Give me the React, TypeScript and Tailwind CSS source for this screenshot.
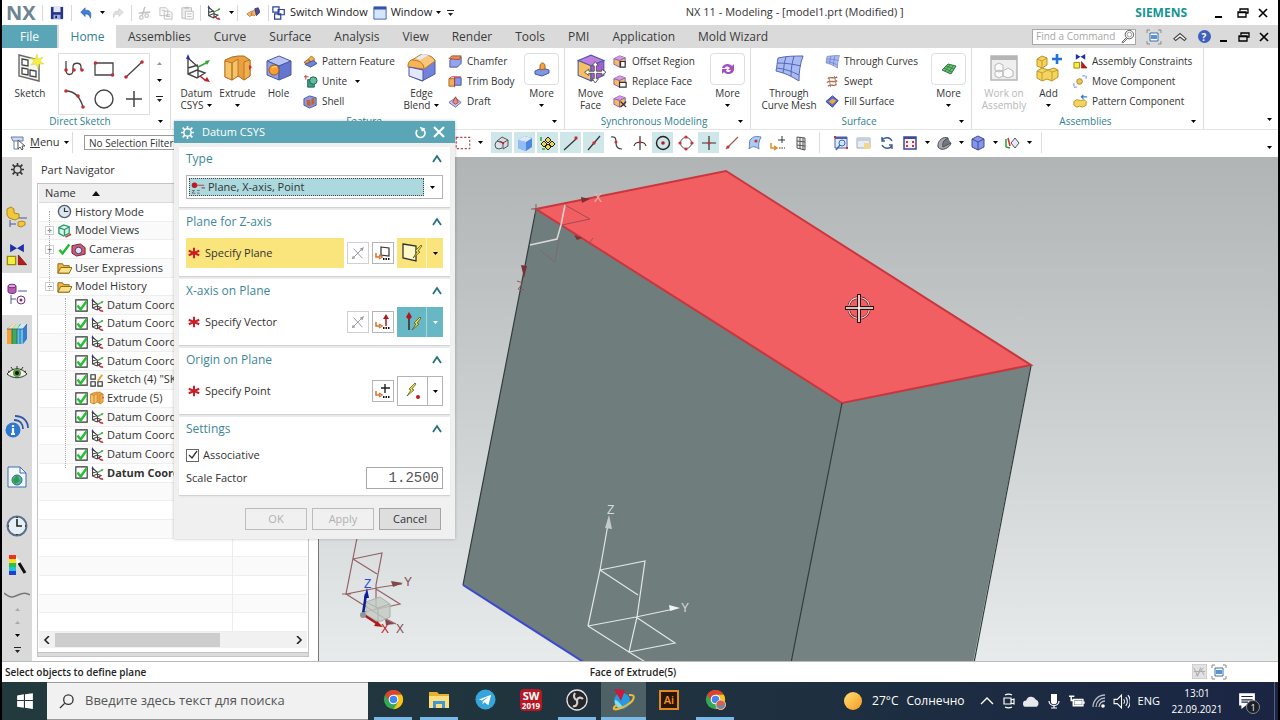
import React from 'react';

type Kids = { children?: React.ReactNode };

interface IcoProps extends Kids {
  size?: number;
  box?: number;
  className?: string;
}

function Ico({ size = 16, box = 16, className = '', children }: IcoProps) {
  return (
    <svg
      width={size}
      height={size}
      viewBox={`0 0 ${box} ${box}`}
      fill="none"
      className={`shrink-0 ${className}`}
      aria-hidden="true"
    >
      {children}
    </svg>
  );
}

const Caret = ({ className = 'fill-black' }: { className?: string }) => (
  <svg width="5" height="3" viewBox="0 0 5 3" className={`shrink-0 ${className}`} aria-hidden="true">
    <path d="M0 0h5L2.5 3z" />
  </svg>
);

const BarCaret = () => (
  <svg width="7" height="6" viewBox="0 0 7 6" className="shrink-0" aria-hidden="true">
    <path d="M0 0h7v1H0zM1 3h5L3.5 6z" fill="#222" />
  </svg>
);

const Sep = () => <span className="h-4 w-px shrink-0 bg-[#d8d8d8]" />;

/* ---------- drawings ---------- */

const Csys = ({ size = 16 }: { size?: number }) => (
  <Ico size={size} box={28}>
    <path d="M5 4v16l9 4 8-5-8-3-9 4M5 4l10 9v11M5 14l10-3" stroke="#444" strokeWidth={size < 20 ? 2.2 : 1.4} />
    <path d="M15 13l10-5" stroke="#3aa23a" strokeWidth={size < 20 ? 2.4 : 1.6} />
    <path d="M27 6l-5 1 2 4z" fill="#3aa23a" />
    <path d="M17 22l5 4" stroke="#c11c2a" strokeWidth={size < 20 ? 2.4 : 1.6} />
    <path d="M27 28l-6-1 3-4z" fill="#c11c2a" />
    <path d="M3 5l2-5 2 5z" fill="#2430c0" />
  </Ico>
);

const Cube = ({ size = 28, top = '#b9c4f4', left = '#8e9fe8', right = '#6476cf', children }: { size?: number; top?: string; left?: string; right?: string } & Kids) => (
  <Ico size={size} box={28}>
    <path d="M2 7L14 2l12 5-12 5z" fill={top} stroke="#4c5aa0" />
    <path d="M2 7l12 5v14L2 21z" fill={left} stroke="#4c5aa0" />
    <path d="M26 7l-12 5v14l12-5z" fill={right} stroke="#4c5aa0" />
    {children}
  </Ico>
);

const SketchIcon = () => (
  <Ico size={28} box={28}>
    <path d="M3 1l20 5v21L3 22z" fill="#f6f6f2" stroke="#666" strokeWidth="1.4" />
    <path d="M6 5l6 1v6l-6-1zM6 14l6 1v6l-6-1zM14 16l6 1v6l-6-1z" stroke="#444" strokeWidth="1.3" fill="#fff" />
    <path d="M21 0l1 5 5-2-3 4 4 3-5 0-1 5-2-5-5 1 3-4-4-3 5 1z" fill="#f4ee4a" stroke="#d6cf3a" strokeWidth=".5" />
  </Ico>
);

const ExtrudeIcon = ({ size = 28 }: { size?: number }) => (
  <Ico size={size} box={28}>
    <path d="M1 6l7-3 6-1h6l6 4v16l-6 4-6-4-6 4-7-3z" fill="#e8a040" stroke="#b06a1a" />
    <path d="M1 7l7 2v17l-7-3zM14 5v17l-6 4V9z" fill="#f6c468" stroke="#b06a1a" strokeWidth=".8" />
    <path d="M20 8v18l6-4V6z" fill="#f0b050" stroke="#b06a1a" strokeWidth=".8" />
    <path d="M25 11l3 2-3 3" fill="#d22" />
  </Ico>
);

const HoleIcon = () => (
  <Cube>
    <circle cx="9" cy="16" r="5" fill="#f6a030" stroke="#a85a10" />
    <path d="M7 14a4 4 0 0 1 5-1" stroke="#ffe0a0" />
  </Cube>
);

const EdgeBlendIcon = () => (
  <Ico size={30} box={30}>
    <path d="M3 9l12-6c6-1 12 1 13 5v13l-13 7-12-5z" fill="#7183dc" stroke="#4a58a8" />
    <path d="M1 13c0-6 5-8 11-6 4 1 5 4 5 9L1 14z" fill="#f5b455" stroke="#c07820" />
    <path d="M5 7l8-5c7-1 13 1 15 6l-11 8c0-6-5-9-12-9z" fill="#f7c67a" stroke="#c07820" />
    <path d="M9 5l7-4 6 1-9 5z" fill="#e4e9fd" />
    <path d="M2 14l14 3v11L2 23z" fill="#e2e7fc" stroke="#4a58a8" />
  </Ico>
);

const MoveFaceIcon = () => (
  <Cube size={30} top="#c07fe0" left="#f7c063" right="#a65fd0">
    <path
      d="M18 8l3 4h-2v5h5v-2l4 3-4 3v-2h-5v5h2l-3 4-3-4h2v-5h-5v2l-4-3 4-3v2h5v-5h-2z"
      fill="#fff"
      stroke="#555"
      strokeWidth=".9"
    />
  </Cube>
);

const MeshIcon = ({ size = 30 }: { size?: number }) => (
  <Ico size={size} box={30}>
    <path d="M4 5c9-2 16-2 25-2-3 8-4 16-4 25-8-5-14-8-23-10 1-5 1-8 2-13z" fill="#a9bbf2" stroke="#5468b4" />
    <path d="M12 4c-2 5-2 11-3 16M20 3c-2 7-3 13-3 20M3 10c8 0 16 1 24 3M3 15c8 1 14 3 22 7" stroke="#5468b4" />
  </Ico>
);

const WorkAsmIcon = () => (
  <Ico size={28} box={28}>
    <path d="M1 2h26v24H1z" fill="#efefef" stroke="#b5b5b5" strokeWidth="1.5" />
    <path d="M1 2h26v4H1z" fill="#b5b5b5" />
    <path d="M5 11l4-2 4 2v5l-4 2-4-2zM5 18l4-2 4 2v4l-4 2-4-2zM13 17l5-3 5 3v5l-5 2-5-2z" fill="#fafafa" stroke="#b8b8b8" />
  </Ico>
);

const AddIcon = () => (
  <Ico size={28} box={28}>
    <path d="M2 5l5-3 5 2v7l-5 3-5-2z" fill="#f4d35e" stroke="#b99322" />
    <path d="M2 17l5-3 6 2 6-2 4 2v7l-6 4-5-2-5 2-5-3z" fill="#f4d35e" stroke="#b99322" />
    <path d="M2 5l5 2 5-3M7 7v6M2 17l5 2 6-3 4 2 6-2M7 19v7M17 18v8" stroke="#b99322" strokeWidth=".8" />
    <path d="M22 0v10M17 5h10" stroke="#2272d8" strokeWidth="2.6" />
  </Ico>
);

const Mini = ({ a, b, mark }: { a: string; b: string; mark?: string }) => (
  <Ico size={15}>
    <path d="M1 5l6-3 6 2v7l-6 3-6-3z" fill={a} stroke={b} />
    <path d="M1 5l6-3 6 2-6 3z" fill="#cf9ae6" />
    <path d="M1 5l6 2 6-3M7 7v7" stroke={b} />
    {mark && <path d={mark} stroke="#333" strokeWidth="1.3" fill="#fff" />}
  </Ico>
);

const PatternIcon = () => (
  <Ico size={15}>
    <path d="M1 9l4-3 4 2-4 3z" fill="#f0a040" stroke="#9a5a1a" />
    <path d="M6 5l3-3 3 3v3H7z" fill="#f2b050" stroke="#b06a1a" />
    <path d="M2 11l6 3 7-4-4-3z" fill="#6c86dc" stroke="#42549c" />
  </Ico>
);

const UniteIcon = () => (
  <Ico size={15}>
    <path d="M5 6h7v8H5z" fill="#3f9f88" stroke="#1d5f50" />
    <circle cx="11" cy="7" r="4" fill="#5fbf9f" stroke="#1d5f50" />
    <path d="M3 1v5M1 3h5" stroke="#c33" />
  </Ico>
);

const ShellIcon = () => (
  <Ico size={15}>
    <path d="M1 5l6-3 7 2v8l-7 3-6-3z" fill="#8b99dd" stroke="#4b579a" />
    <path d="M4 6l4 1v6l-4-1zM9 5l3-1v7l-3 1z" fill="#c4622d" />
  </Ico>
);

const ChamferIcon = () => (
  <Ico size={15}>
    <path d="M2 7l3-4h9v7l-4 4H2z" fill="#93a5ea" stroke="#4b579a" />
    <path d="M1 5l3-3h10l-2 4z" fill="#e88a5a" stroke="#a3502a" />
  </Ico>
);

const TrimIcon = () => (
  <Ico size={15}>
    <path d="M1 5h6v8H1z" fill="#f2ae5a" stroke="#aa6a22" />
    <path d="M7 4h7v8H7z" fill="#8798e6" stroke="#4b579a" />
    <path d="M1 5l3-2h10M7 3v11" stroke="#c33" />
  </Ico>
);

const DraftIcon = () => (
  <Ico size={15}>
    <path d="M1 9l7-5 6 5-6 5z" fill="#c4cdf4" stroke="#6a6aa0" />
    <path d="M5 9l3-6 3 6-3 2z" fill="#e88b80" stroke="#a34444" />
  </Ico>
);

const SweptIcon = () => (
  <Ico size={15}>
    <path d="M3 5c4-3 6 1 10-2M2 9c4-3 7 1 11-2M3 13c4-3 6 1 9-2" stroke="#c2663c" strokeWidth="1.5" />
    <path d="M4 3l2 11M10 2l2 10" stroke="#888" />
  </Ico>
);

const FillIcon = () => (
  <Ico size={15}>
    <path d="M1 8l7-6 6 5-6 7z" fill="#5a6ed0" stroke="#333f8a" />
    <path d="M4 8l4-3 4 2-4 4z" fill="#f2a83a" />
  </Ico>
);

const ConstraintIcon = ({ size = 16 }: { size?: number }) => (
  <Ico size={size}>
    <path d="M3 0l5 3-5 3zM13 0L8 3l5 3z" fill="#1f2fa8" />
    <path d="M1 9h6v6H1z" fill="#f4ee3c" stroke="#9a8a10" />
    <path d="M9 8l6 7H9z" fill="#c01818" stroke="#7a0f0f" strokeWidth=".6" />
  </Ico>
);

const MoveCompIcon = () => (
  <Ico size={15}>
    <circle cx="7" cy="8" r="3" fill="#f0c850" stroke="#a8822a" />
    <path d="M10 2h4v4M1 10v4h4" stroke="#5b7fd8" strokeDasharray="3 1" />
  </Ico>
);

const PatCompIcon = () => (
  <Ico size={15}>
    <path d="M1 8l3-2 4 1 4-1 2 2v4l-4 2-3-1-3 1-3-2z" fill="#f4d35e" stroke="#b99322" />
    <path d="M15 3H9M11 1L9 3l2 2" stroke="#3a78d8" strokeWidth="1.4" />
  </Ico>
);

const GearIcon = ({ size = 14, className = '' }: { size?: number; className?: string }) => (
  <Ico size={size} className={className}>
    <circle cx="8" cy="8" r="4.5" stroke="currentColor" strokeWidth="1.8" />
    <path
      d="M8 0v3M8 13v3M0 8h3M13 8h3M2 2l3 3M11 11l3 3M14 2l-3 3M5 11l-3 3"
      stroke="currentColor"
      strokeWidth="2"
    />
  </Ico>
);

const Minimize = () => (
  <Ico size={12} box={12}>
    <path d="M2 10h7" stroke="#000" strokeWidth="2" />
  </Ico>
);
const Restore = () => (
  <Ico size={12} box={12}>
    <path d="M3 4V2h8v4H9M1 5h8v5H1zM1 5.500h8" stroke="#000" strokeWidth="1.3" />
  </Ico>
);
const Close = () => (
  <Ico size={12} box={12}>
    <path d="M2 2l8 8M10 2l-8 8" stroke="#000" strokeWidth="1.7" />
  </Ico>
);
const FullScreen = () => (
  <Ico size={16}>
    <path d="M1 4V1h3M12 1h3v3M15 12v3h-3M4 15H1v-3" stroke="#888" />
    <path d="M4 4h8v8H4z" fill="#fff" stroke="#3b6ea8" />
    <path d="M5 6h6v4H5z" fill="#5c93d6" />
  </Ico>
);

/* ---------- title bar ---------- */

function IconButton({ label, className = '', children }: { label: string; className?: string } & Kids) {
  return (
    <button type="button" aria-label={label} className={`flex items-center justify-center ${className}`}>
      {children}
    </button>
  );
}

function TitleBar() {
  return (
    <header className="flex h-[25px] shrink-0 items-center bg-white">
      <div className="flex shrink-0 items-center">
        <span className="w-9 pl-1 text-[20px] leading-6 font-bold text-[#6d8593]">NX</span>
        <span className="ml-1" />
        <Sep />
        <IconButton label="Save" className="w-7">
          <Ico size={14}>
            <path d="M1 1h14v14H1z" fill="#26348c" />
            <path d="M4 1h8v6H4z" fill="#dfe6f6" />
            <path d="M4 10h8v5H4z" fill="#9fb0dd" />
            <path d="M6 11h2v3H6z" fill="#1a2468" />
          </Ico>
        </IconButton>
        <Sep />
        <IconButton label="Undo" className="w-7">
          <Ico size={14}>
            <path d="M2 7l5-5v3c5-1 8 2 6 9-1-4-3-5-6-5v3z" fill="#3f7fd6" stroke="#2a58a6" strokeWidth=".7" />
          </Ico>
        </IconButton>
        <Caret />
        <IconButton label="Redo" className="w-[26px]">
          <Ico size={14}>
            <path d="M14 7L9 3v3C4 5 2 8 3 13c1-3 3-4 6-4v3z" fill="#e3e3e3" stroke="#c4c4c4" strokeWidth=".7" />
          </Ico>
        </IconButton>
        <Sep />
        <IconButton label="Cut" className="w-6">
          <Ico size={14}>
            <path d="M9 1L6 11M2 8l13-1" stroke="#c4c4c4" strokeWidth="1.8" />
            <circle cx="5" cy="13" r="2" stroke="#c4c4c4" strokeWidth="1.4" />
            <circle cx="11" cy="11" r="2" stroke="#c4c4c4" strokeWidth="1.4" />
          </Ico>
        </IconButton>
        <IconButton label="Copy" className="w-5">
          <Ico size={14}>
            <path d="M1 2h7l2 2v7H1zM6 6h6l3 2v7H6z" fill="#fafafa" stroke="#bdbdbd" />
            <path d="M8 10h5M8 12h5M3 5h4" stroke="#bdbdbd" />
          </Ico>
        </IconButton>
        <IconButton label="Paste" className="w-6">
          <Ico size={14}>
            <path d="M1 2h11v12H1z" fill="#eee" stroke="#bdbdbd" />
            <path d="M5 6h9v9H5z" fill="#fafafa" stroke="#bdbdbd" />
            <path d="M4 1h5v2H4z" fill="#bdbdbd" />
            <path d="M7 9h5M7 12h5" stroke="#bdbdbd" />
          </Ico>
        </IconButton>
        <Sep />
        <IconButton label="Datum CSYS" className="w-6">
          <Csys size={15} />
        </IconButton>
        <span className="flex w-3 justify-center">
          <Caret />
        </span>
        <Sep />
        <IconButton label="Touch mode" className="w-[30px]">
          <Ico size={14}>
            <path d="M1 9l5-3 4 1-2 3-4 2z" fill="#f4b26a" stroke="#a9702f" strokeWidth=".8" />
            <path d="M7 6l4-2 2 2-3 5-4-1z" fill="#f4b26a" stroke="#a9702f" strokeWidth=".8" />
            <path d="M10 3l4-1 2 5-4 4z" fill="#4a4a9a" stroke="#2d2d6a" strokeWidth=".8" />
          </Ico>
        </IconButton>
        <Sep />
        <button type="button" className="flex items-center gap-1 pl-[3px] text-[11px] text-[#222]">
          <Ico size={14}>
            <path d="M1 1h7v6H1zM7 4h7v6H7zM3 9h7v6H3z" fill="#fff" stroke="#2a3f9c" strokeWidth="1.400" />
          </Ico>
          Switch Window
        </button>
        <button type="button" className="ml-[5px] flex items-center gap-1 text-[11px] text-[#222]">
          <Ico size={14}>
            <path d="M1 1h14v14H1z" fill="#d6e6fa" stroke="#3352b0" />
            <path d="M1 1h14v3H1z" fill="#3352b0" />
          </Ico>
          Window
          <Caret />
        </button>
        <span className="ml-[6px]">
          <BarCaret />
        </span>
      </div>
      <h1 className="min-w-0 flex-1 truncate text-center text-[11px] text-[#333]">
        NX 11 - Modeling - [model1.prt (Modified) ]
      </h1>
      <div className="flex shrink-0 items-center pr-[7px]">
        <span className="mr-5 text-[12px] font-bold text-[#129590]">SIEMENS</span>
        <IconButton label="Minimize" className="w-6"><Minimize /></IconButton>
        <IconButton label="Restore" className="w-6"><Restore /></IconButton>
        <IconButton label="Close" className="w-4"><Close /></IconButton>
      </div>
    </header>
  );
}

const tabs = ['Assemblies', 'Curve', 'Surface', 'Analysis', 'View', 'Render', 'Tools', 'PMI', 'Application', 'Mold Wizard'];

function TabBar() {
  return (
    <nav className="flex h-[23px] shrink-0 items-stretch bg-[#dadada] text-[12px] text-[#3a3a3a]">
      <button type="button" className="w-[55px] bg-[#5aa6b6] text-white">File</button>
      <button type="button" className="ml-0.5 w-[57px] bg-white text-[#2f8190]">Home</button>
      {tabs.map(tab => (
        <button type="button" key={tab} className="ml-px px-[11px]">{tab}</button>
      ))}
      <div className="ml-auto flex items-center pr-[6px]">
        <label className="flex h-4 w-[104px] items-center border border-[#a8a8a8] bg-white">
          <input
            type="text"
            aria-label="Find a Command"
            placeholder="Find a Command"
            className="w-0 flex-1 pl-[3px] text-[10px] outline-none placeholder:text-[#a6a6a6]"
          />
          <Ico size={15}>
            <circle cx="10" cy="6" r="4.500" stroke="#555" />
            <circle cx="10" cy="6" r="2.500" stroke="#999" />
            <path d="M7 9l-5 5 1 1 5-5" stroke="#555" />
          </Ico>
        </label>
        <IconButton label="Full screen" className="ml-1 w-7"><FullScreen /></IconButton>
        <IconButton label="Minimize ribbon" className="w-6">
          <Ico size={14}>
            <path d="M1 10l7-6 7 6-2 2-5-4-5 4z" fill="#fff" stroke="#444" strokeWidth="1.2" />
          </Ico>
        </IconButton>
        <IconButton label="Help" className="w-6">
          <span className="flex size-[13px] items-center justify-center rounded-full bg-[#3c5fc0] text-[10px] leading-3 font-bold text-white">?</span>
        </IconButton>
        <IconButton label="Minimize part" className="w-4"><Minimize /></IconButton>
        <IconButton label="Restore part" className="w-6"><Restore /></IconButton>
        <IconButton label="Close part" className="w-4"><Close /></IconButton>
      </div>
    </nav>
  );
}

/* ---------- ribbon ---------- */

function Group({ title, className, children }: { title: string; className: string } & Kids) {
  return (
    <section className={`flex shrink-0 flex-col border-r border-[#dcdcdc] pt-[3px] ${className}`}>
      <div className="flex h-[62px]">{children}</div>
      <div className="flex h-4 items-center pr-[7px]">
        <h2 className="flex-1 text-center text-[10px] leading-4 text-[#2d7f8f]">{title}</h2>
        <Caret />
      </div>
    </section>
  );
}

function Big({ icon, lines, caret, className = 'w-[41px]' }: { icon: React.ReactNode; lines: string[]; caret?: boolean; className?: string }) {
  return (
    <button type="button" className={`flex shrink-0 flex-col items-center pt-[3px] text-[10px] leading-3 ${className}`}>
      <span className="mb-[5px] flex h-7 items-center">{icon}</span>
      <span className="whitespace-nowrap">{lines[0]}</span>
      <span className="flex h-3 items-center gap-1 whitespace-nowrap">
        {lines[1]}
        {caret && <Caret />}
      </span>
    </button>
  );
}

function Small({ icon, text, caret }: { icon: React.ReactNode; text: string; caret?: boolean }) {
  return (
    <button type="button" className="flex h-5 items-center gap-1 text-[10px] whitespace-nowrap">
      {icon}
      {text}
      {caret && <span className="ml-1"><Caret /></span>}
    </button>
  );
}

function More({ children }: Kids) {
  return (
    <button type="button" className="ml-auto flex w-[35px] shrink-0 flex-col items-center pt-0.5 text-[10px] leading-3">
      <span className="mb-0.5 flex h-8 w-full items-center justify-center rounded-sm border border-[#dedede]">{children}</span>
      More
      <span className="flex h-3 items-center"><Caret /></span>
    </button>
  );
}

const face = { a: '#f5bd62', b: '#8a5aa8' };

function Ribbon() {
  return (
    <div className="flex h-[81px] shrink-0 bg-white text-[#333]">
      <Group title="Direct Sketch" className="w-[169px]">
        <Big icon={<SketchIcon />} lines={['Sketch']} className="w-14" />
        <div className="mt-0.5 grid h-[62px] w-[92px] shrink-0 grid-cols-3 place-items-center border border-[#dedede]">
          <IconButton label="Profile">
            <Ico size={22} box={22}>
              <path d="M3 3v9c0 6 7 6 7 0V9c0-5 8-5 8 0v3" stroke="#444" strokeWidth="1.3" />
              <g fill="#c92a34"><circle cx="3" cy="12" r="1.800" /><circle cx="11" cy="12" r="1.800" /><circle cx="19" cy="12" r="1.800" /></g>
            </Ico>
          </IconButton>
          <IconButton label="Rectangle">
            <Ico size={22} box={22}>
              <path d="M2 5h18v12H2z" stroke="#444" strokeWidth="1.300" />
              <g fill="#c92a34"><circle cx="2.500" cy="5" r="1.800" /><circle cx="19.500" cy="17" r="1.800" /></g>
            </Ico>
          </IconButton>
          <IconButton label="Line">
            <Ico size={22} box={22}>
              <path d="M3 19L19 4" stroke="#444" strokeWidth="1.300" />
              <g fill="#c92a34"><circle cx="3" cy="19" r="1.800" /><circle cx="19" cy="4" r="1.800" /></g>
            </Ico>
          </IconButton>
          <IconButton label="Arc">
            <Ico size={22} box={22}>
              <path d="M3 3c8 0 14 6 17 16" stroke="#444" strokeWidth="1.300" />
              <g fill="#c92a34"><circle cx="3" cy="3" r="1.800" /><circle cx="15" cy="8" r="1.800" /><circle cx="20" cy="19" r="1.800" /></g>
            </Ico>
          </IconButton>
          <IconButton label="Circle">
            <Ico size={22} box={22}><circle cx="11" cy="11" r="9" stroke="#444" strokeWidth="1.400" /></Ico>
          </IconButton>
          <IconButton label="Point">
            <Ico size={22} box={22}><path d="M11 3v16M3 11h16" stroke="#444" strokeWidth="1.500" /></Ico>
          </IconButton>
        </div>
        <div className="flex w-[18px] flex-col items-center justify-around py-1">
          <Caret className="rotate-180 fill-[#999]" />
          <Caret />
          <BarCaret />
        </div>
      </Group>

      <Group title="Feature" className="w-[394px] pl-[5px]">
        <Big icon={<Csys size={28} />} lines={['Datum', 'CSYS']} caret />
        <Big icon={<ExtrudeIcon />} lines={['Extrude']} caret />
        <Big icon={<HoleIcon />} lines={['Hole']} />
        <div className="ml-1 w-[98px]">
          <Small icon={<PatternIcon />} text="Pattern Feature" />
          <Small icon={<UniteIcon />} text="Unite" caret />
          <Small icon={<ShellIcon />} text="Shell" />
        </div>
        <Big icon={<EdgeBlendIcon />} lines={['Edge', 'Blend']} caret />
        <div className="ml-1.5">
          <Small icon={<ChamferIcon />} text="Chamfer" />
          <Small icon={<TrimIcon />} text="Trim Body" />
          <Small icon={<DraftIcon />} text="Draft" />
        </div>
        <div className="ml-auto mr-[5px] flex">
          <More>
            <Ico size={16}>
              <path d="M1 10l7-3 7 2v3l-7 3-7-2z" fill="#7d97e4" stroke="#44589f" />
              <path d="M6 9V5c0-4 5-4 5 0v3z" fill="#f2a34a" stroke="#a8641c" />
            </Ico>
          </More>
        </div>
      </Group>

      <Group title="Synchronous Modeling" className="w-[186px] pl-[5px]">
        <Big icon={<MoveFaceIcon />} lines={['Move', 'Face']} />
        <div className="ml-0.5">
          <Small icon={<Mini {...face} mark="M8 8h5v6H8z" />} text="Offset Region" />
          <Small icon={<Mini {...face} mark="M7 9h7v5H7z" />} text="Replace Face" />
          <Small icon={<Mini {...face} mark="M8 8l6 6M14 8l-6 6" />} text="Delete Face" />
        </div>
        <div className="ml-auto mr-[5px] flex">
          <More>
            <Ico size={16}>
              <path d="M2 7c1-5 8-5 10-2l2-2v6H8l2-2C8 5 5 5 5 7zM14 9c-1 5-8 5-10 2l-2 2V8h5l-1 2c2 2 4 1 5-1z" fill="#a24fc0" />
            </Ico>
          </More>
        </div>
      </Group>

      <Group title="Surface" className="w-[221px] pl-2">
        <Big icon={<MeshIcon />} lines={['Through', 'Curve Mesh']} className="w-[60px]" />
        <div className="ml-1.5">
          <Small icon={<MeshIcon size={15} />} text="Through Curves" />
          <Small icon={<SweptIcon />} text="Swept" />
          <Small icon={<FillIcon />} text="Fill Surface" />
        </div>
        <div className="ml-auto mr-[5px] flex">
          <More>
            <Ico size={16}>
              <path d="M1 9l6-6 8 2-5 8z" fill="#6bbf78" stroke="#2d7a3c" />
              <path d="M3 7l8 4M5 5l8 3M9 4l-5 6M12 5l-5 7" stroke="#2d7a3c" strokeWidth=".8" />
            </Ico>
          </More>
        </div>
      </Group>

      <Group title="Assemblies" className="w-[232px] pl-2">
        <span className="flex text-[#b8b8b8]">
          <Big icon={<WorkAsmIcon />} lines={['Work on', 'Assembly']} className="w-12" />
        </span>
        <Big icon={<AddIcon />} lines={['Add']} caret />
        <div className="ml-1">
          <Small icon={<ConstraintIcon size={15} />} text="Assembly Constraints" />
          <Small icon={<MoveCompIcon />} text="Move Component" />
          <Small icon={<PatCompIcon />} text="Pattern Component" />
        </div>
      </Group>
      <div className="flex flex-1 items-end justify-end pr-[6px] pb-2">
        <Caret />
      </div>
    </div>
  );
}

/* ---------- selection toolbar ---------- */

interface Tool {
  label: string;
  on?: boolean;
  caret?: boolean;
  art: React.ReactNode;
}

const snapTools: Tool[] = [
  { label: 'Shaded edges', on: true, art: <><circle cx="5" cy="10" r="4" fill="#dfe3f0" stroke="#555" /><path d="M3 6l5-4 6 3v6l-5 3M3 6l6 2 5-3M9 8v6" stroke="#555" fill="#d8d8e2" /><circle cx="9" cy="8" r="1.200" fill="#c22" /></> },
  { label: 'Solid body', on: true, art: <><path d="M1 5l6-4 8 2v9l-6 4-8-3z" fill="#4f86e0" /><path d="M1 5l8 2v9l-8-3z" fill="#92bcf8" /><path d="M1 5l6-4 8 2-6 4z" fill="#dbe9ff" /></> },
  { label: 'Snap points', on: true, art: <><path d="M8 2l3 3-3 3-3-3zM4 6l3 3-3 3-3-3zM12 6l3 3-3 3-3-3zM8 9l3 3-3 3-3-3z" fill="#f0d848" stroke="#222" /><path d="M1 2v4M2 14h3" stroke="#2a2" strokeWidth="1.500" /></> },
  { label: 'End point', on: true, art: <><path d="M1 15L13 4" stroke="#333" strokeWidth="1.200" /><circle cx="13" cy="3" r="1.700" fill="#c33" /></> },
  { label: 'Mid point', on: true, art: <><path d="M2 15L14 1" stroke="#333" strokeWidth="1.200" /><circle cx="8" cy="8" r="1.700" fill="#c33" /></> },
  { label: 'Control point', art: <><path d="M2 2c5-1 5 2 5 6s2 6 6 6" stroke="#444" strokeWidth="1.200" /><circle cx="7" cy="7" r="1.500" fill="#c33" /></> },
  { label: 'Intersection', art: <><path d="M8 1v14M2 11c1-5 11-5 12 0" stroke="#333" strokeWidth="1.200" /><circle cx="8" cy="7" r="1.500" fill="#c33" /></> },
  { label: 'Arc center', on: true, art: <><circle cx="8" cy="8" r="6.500" stroke="#222" strokeWidth="1.400" /><circle cx="8" cy="8" r="1.800" fill="#a22" /></> },
  { label: 'Quadrant point', art: <><circle cx="8" cy="8" r="5.500" stroke="#555" /><g fill="#c33"><circle cx="8" cy="2" r="1.600" /><circle cx="8" cy="14" r="1.600" /><circle cx="2" cy="8" r="1.600" /><circle cx="14" cy="8" r="1.600" /></g></> },
  { label: 'Existing point', on: true, art: <><path d="M8 1v14M1 8h14" stroke="#333" strokeWidth="1.200" /><circle cx="8" cy="8" r="1.600" fill="#c33" /></> },
  { label: 'Point on curve', art: <><path d="M2 14L14 2" stroke="#a85a50" strokeWidth="1.200" /><circle cx="4" cy="12" r="1.600" fill="#c33" /></> },
  { label: 'Point on face', art: <><path d="M3 5c3-4 7-4 11-3-2 4-3 8-2 12-4-3-7-3-10 0 1-4 0-6 1-9z" fill="#a9cbf4" stroke="#5f86c0" /><circle cx="9" cy="6" r="1.600" fill="#c33" /></> },
  { label: 'Point constructor', art: <><path d="M12 1v7M8 5h7" stroke="#333" /><path d="M1 8v5h5M4 11l3 2-3 2" stroke="#e08a20" strokeWidth="1.500" /><path d="M9 13h6" stroke="#333" strokeDasharray="1.500 1" /></> },
  { label: 'Grid point', art: <><path d="M4 2l8 1v12l-8-2zM7 2v12M10 3v12M4 6l8 1M4 10l8 1" stroke="#555" fill="#eee" /></> },
];

const viewTools: Tool[] = [
  { label: 'Zoom window', art: <><path d="M2 2h12v11H2z" stroke="#4b5fae" fill="#e4e9f8" /><path d="M2 3h12" stroke="#4b5fae" strokeWidth="2" /><circle cx="9" cy="8" r="3" fill="#cfe6f8" stroke="#3a6fb0" /><path d="M7 10l-4 5" stroke="#3a6fb0" strokeWidth="1.500" /><path d="M1 1h2v2H1zM13 12h2v2h-2z" fill="#c33" /></> },
  { label: 'Fit', art: <><path d="M1 3h13v10H1z" fill="#e8edf4" stroke="#a5aab5" /><path d="M1 3h13v3H1z" fill="#c3d0e4" /><path d="M8 8h6v6H8z" fill="#f1d690" /></> },
  { label: 'Rotate', art: <path d="M13 6A6 6 0 0 0 3 5M3 10a6 6 0 0 0 10 1M3 2v4h3M13 14v-4h-3" stroke="#3a5a9a" strokeWidth="1.400" /> },
  { label: 'Layout', caret: true, art: <><path d="M2 2h12v12H2z" fill="#f6f2f2" stroke="#3a4a9c" strokeWidth="1.500" /><path d="M2 3h12" stroke="#3a4a9c" strokeWidth="2" /><path d="M5 6v2M11 6v2M5 10v2M11 10v2" stroke="#c33" strokeWidth="2" /></> },
  { label: 'Render style', caret: true, art: <><path d="M2 12C1 5 8 1 12 3v5h3c-1 5-10 9-13 4z" fill="#a5a9ad" stroke="#4b4f54" /><path d="M12 3C7 5 6 9 7 12l8-4" stroke="#4b4f54" fill="#72777c" /></> },
  { label: 'Orient view', caret: true, art: <><path d="M2 4l6-3 6 3v8l-6 3-6-3z" fill="#8596e4" stroke="#3f4d9c" /><path d="M2 4l6 3 6-3M8 7v8" stroke="#3f4d9c" /></> },
  { label: 'Section', caret: true, art: <><path d="M2 4v8M2 12l4 1" stroke="#2a9a3a" strokeWidth="1.500" /><path d="M4 3l2 8" stroke="#c33" strokeWidth="1.500" /><path d="M11 3l4 5-4 5-4-5z" fill="#e6e9f8" stroke="#555" /></> },
];

function ToolButton({ tool }: { tool: Tool }) {
  return (
    <>
      <button
        type="button"
        aria-label={tool.label}
        className={tool.on ? 'flex w-[21px] shrink-0 items-center justify-center bg-[#cfe7e8]' : 'flex w-[21px] shrink-0 items-center justify-center'}
      >
        <Ico size={16}>{tool.art}</Ico>
      </button>
      {tool.caret && <span className="ml-px flex w-2 items-center justify-center"><Caret /></span>}
    </>
  );
}

function SelectionBar() {
  return (
    <div className="flex h-7 shrink-0 items-stretch border-t border-[#e4e4e4] bg-white pt-0.5 pb-1 text-[#333]">
      <button type="button" className="ml-2 flex w-[62px] items-center gap-1 text-[11px]">
        <Ico size={16}>
          <path d="M1 2h12v4H3z" fill="#cdd9ee" stroke="#6a7fa8" />
          <path d="M4 6v8h5" stroke="#6a7fa8" />
          <path d="M8 5v9l2-2 2 3 1-1-1-3h3z" fill="#fff" stroke="#555" />
        </Ico>
        <span><u>M</u>enu</span>
        <Caret />
      </button>
      <span className="w-px bg-[#dcdcdc]" />
      <select
        aria-label="Selection filter"
        className="my-[3px] ml-[11px] w-40 appearance-none border border-[#9a9a9a] bg-white pl-1 text-[10px] outline-none"
      >
        <option>No Selection Filter</option>
      </select>
      <div className="ml-[210px] flex shrink-0 items-center">
        <Ico size={18}>
          <path d="M2 3h12v10H2z" stroke="#b04a4a" strokeDasharray="2 1.500" />
        </Ico>
        <span className="ml-1.5 flex w-3"><Caret /></span>
      </div>
      <div className="ml-px flex gap-0.5">
        {snapTools.map(tool => <ToolButton key={tool.label} tool={tool} />)}
      </div>
      <span className="mx-2 w-px bg-[#dcdcdc]" />
      <div className="ml-0.5 flex gap-0.5">
        {viewTools.map(tool => <ToolButton key={tool.label} tool={tool} />)}
      </div>
      <span className="ml-2 w-px bg-[#dcdcdc]" />
      <span className="ml-auto flex items-end pr-[6px] pb-1"><Caret /></span>
    </div>
  );
}

/* ---------- resource bar and part navigator ---------- */

function ResourceBar() {
  return (
    <aside className="flex w-[30px] shrink-0 flex-col items-center bg-[#d9d9d9]">
      <IconButton label="Options" className="h-6 w-full"><GearIcon size={13} className="text-[#333]" /></IconButton>
      <IconButton label="Assembly Navigator" className="mt-4 h-10 w-full">
        <Ico size={22} box={22}>
          <path d="M1 3l4-2 3 2v4l5 1v4l-4 2-6-2-2-3z" fill="#f0c83a" stroke="#b08a18" />
          <path d="M13 12h8M4 14v7M4 18h6" stroke="#44589f" />
          <path d="M12 16l4-1 3 1v3l-4 2-3-1z" fill="#f0c83a" stroke="#b08a18" />
        </Ico>
      </IconButton>
      <IconButton label="Constraint Navigator" className="h-9 w-full"><ConstraintIcon size={22} /></IconButton>
      <IconButton label="Part Navigator" className="h-[42px] w-full bg-white">
        <Ico size={22} box={22}>
          <path d="M2 3v6c1 2 7 2 8 0V3" fill="#b05fb0" stroke="#7a2a80" />
          <ellipse cx="6" cy="3" rx="4" ry="1.800" fill="#dca6dc" stroke="#7a2a80" />
          <path d="M12 8h9M5 12v9M5 16h5" stroke="#44589f" />
          <circle cx="15" cy="17" r="4" stroke="#7a2a80" /><circle cx="15" cy="17" r="1.500" fill="#7a2a80" />
        </Ico>
      </IconButton>
      <IconButton label="Reuse Library" className="h-[38px] w-full">
        <Ico size={22} box={22}>
          <path d="M1 6l6-5h14v15l-4 5H1z" fill="#3a7ad0" />
          <path d="M1 6l6-5h3L6 6z" fill="#fbe0a0" />
          <path d="M6 6l4-5h4l-3 5z" fill="#bfe8c0" />
          <path d="M11 6l4-5h6l-4 5z" fill="#cfe8fa" />
          <path d="M1 6h5v15H1z" fill="#f6a030" />
          <path d="M6 6h5v15H6z" fill="#3fae50" />
          <path d="M11 6h6v15h-6z" fill="#5fc0e8" />
          <path d="M1 6h16M6 6v15M11 6v15M14 6v15M17 6l4-5" stroke="#2a5a80" strokeWidth=".8" />
        </Ico>
      </IconButton>
      <IconButton label="HD3D Tools" className="h-10 w-full">
        <Ico size={22} box={22}>
          <path d="M1 12c6-7 14-7 20 0-6 5-14 5-20 0z" fill="#f2f2ea" stroke="#333" />
          <circle cx="11" cy="11" r="4" fill="#5a9a3a" /><circle cx="11" cy="11" r="2" fill="#111" />
          <path d="M2 9l2 1M5 5l2 3M11 4v3M17 5l-2 3M20 9l-2 1" stroke="#333" />
        </Ico>
      </IconButton>
      <IconButton label="Web Browser" className="mt-1.5 h-14 w-full">
        <Ico size={24} box={24}>
          <circle cx="8" cy="15" r="7.500" fill="#2f78d0" />
          <path d="M8 10v2M8 13v6M6 19h4" stroke="#fff" strokeWidth="2.200" />
          <path d="M9 5c6 0 9 4 9 9M10 1c8 0 13 5 13 12" stroke="#2f58a8" strokeWidth="1.800" />
        </Ico>
      </IconButton>
      <IconButton label="History" className="h-11 w-full">
        <Ico size={22} box={22}>
          <path d="M2 1h12l6 6v14H2z" fill="#f4f8fc" stroke="#3a6fb0" /><path d="M14 1v6h6" stroke="#3a6fb0" />
          <circle cx="11" cy="14" r="5" fill="#4ab0c0" stroke="#2a7080" /><path d="M11 9l3 6-5 3-2-4z" fill="#3a9a3a" />
        </Ico>
      </IconButton>
      <IconButton label="Recent parts" className="h-[54px] w-full">
        <Ico size={22} box={22}>
          <circle cx="11" cy="11" r="9.500" fill="#e6eef6" stroke="#5a6f88" strokeWidth="2" />
          <path d="M11 4v7h5M11 2v1M11 19v1M2 11h1M19 11h1" stroke="#222" strokeWidth="1.600" />
        </Ico>
      </IconButton>
      <IconButton label="Roles" className="h-6 w-full">
        <Ico size={22} box={22}>
          <path d="M3 1h7v4H3z" fill="#f03020" /><path d="M3 5h7v4H3z" fill="#f8e020" /><path d="M3 9h7v4H3z" fill="#30c040" />
          <path d="M3 13h7v4H3z" fill="#20c0e0" /><path d="M3 17h7v4H3z" fill="#2040d0" />
          <path d="M10 3l5 5-4 3z" fill="#fff" /><path d="M13 9l6 10" stroke="#111" strokeWidth="3" />
        </Ico>
      </IconButton>
      <div className="mt-auto flex flex-col items-center gap-2.5 pb-2">
        <svg width="26" height="8" viewBox="0 0 26 8" fill="none" aria-hidden="true">
          <path d="M0 3c7 6 10 4 14 2s8-3 12 0" stroke="#777" strokeWidth="1.5" />
        </svg>
        <Caret className="rotate-180 fill-[#aaa]" />
        <Caret className="rotate-180 fill-[#aaa]" />
        <Caret />
        <BarCaret />
      </div>
    </aside>
  );
}

const Folder = () => (
  <Ico size={15}>
    <path d="M1 4h5l1 2h6v8H1z" fill="#f0b840" stroke="#8a6414" />
    <path d="M4 8h12l-3 6H1z" fill="#fbe08a" stroke="#8a6414" />
  </Ico>
);

const GreenCheck = () => (
  <Ico size={12}>
    <path d="M2 9l4 5 9-12" stroke="#22bb33" strokeWidth="3.200" />
  </Ico>
);

const CheckBoxIcon = () => (
  <Ico size={13}>
    <path d="M1 1h14v14H1z" fill="#fff" stroke="#333" strokeWidth="1.400" />
    <path d="M3 8l4 5 7-10" stroke="#22c033" strokeWidth="3" />
  </Ico>
);

const SketchSmall = () => (
  <Ico size={14}>
    <path d="M1 2h5v5H1zM1 10h5v5H1zM9 10h5v5H9z" stroke="#333" strokeWidth="1.300" />
    <path d="M9 9l5-7" stroke="#e0a030" strokeWidth="2" />
  </Ico>
);

const parents = [
  {
    name: 'History Mode',
    icon: <Ico size={15}><circle cx="8" cy="8" r="6.500" fill="#dbe6f0" stroke="#555f6b" strokeWidth="1.500" /><path d="M8 4v4h4" stroke="#333" strokeWidth="1.300" /></Ico>,
  },
  {
    name: 'Model Views',
    knob: '+',
    icon: <Ico size={15}><path d="M2 5l5-3 6 2v7l-6 3-5-3zM2 5l6 2 5-3M8 7v7" stroke="#2a9a6a" strokeWidth="1.400" fill="#d8f2e6" /><path d="M9 15l6-3" stroke="#c33" strokeWidth="1.600" /></Ico>,
  },
  {
    name: 'Cameras',
    knob: '+',
    check: true,
    icon: <Ico size={15}><path d="M1 4l9-2 5 4v7l-9 2-5-3z" fill="#d05a70" stroke="#70202f" /><circle cx="8" cy="9" r="3.500" fill="#e0e0f0" stroke="#333a8a" /></Ico>,
  },
  { name: 'User Expressions', icon: <Folder /> },
  { name: 'Model History', knob: '−', icon: <Folder /> },
];

const features = ['datum', 'datum', 'datum', 'datum', 'sketch', 'extrude', 'datum', 'datum', 'datum', 'datum'];
const featureNames: Record<string, string> = {
  datum: 'Datum Coord',
  sketch: 'Sketch (4) "SK',
  extrude: 'Extrude (5)',
};
const blankRows = [0, 1, 2, 3, 4, 5, 6, 7];

const rowClass = 'flex min-h-4 items-center border-b border-[#efefef] text-[11px] whitespace-nowrap even:bg-[#fafafa]';

function PartNavigator() {
  return (
    <section className="flex w-[286px] shrink-0 flex-col bg-white pr-[9px] pb-1 pl-[5px]">
      <h2 className="h-[26px] pl-1 text-[11px] leading-[26px] text-[#333]">Part Navigator</h2>
      <div className="flex min-h-0 flex-1 flex-col border border-[#c4c4c4] px-px">
        <div className="flex h-[19px] shrink-0 items-center gap-4 border-b border-[#dcdcdc] bg-[#efefef] pl-1.5 text-[11px] text-[#333]">
          Name
          <svg width="8" height="5" viewBox="0 0 8 5" aria-hidden="true"><path d="M0 5l4-5 4 5z" fill="#111" /></svg>
        </div>
        <ul role="tree" className="relative grid min-h-0 flex-1 auto-rows-fr overflow-hidden text-[#333]">
          {parents.map(p => (
            <li role="treeitem" key={p.name} className={rowClass}>
              <span className="flex w-[15px] justify-end">
                {p.knob && (
                  <span className="flex size-[9px] items-center justify-center border border-[#cfcfcf] bg-white text-[9px] leading-none">{p.knob}</span>
                )}
              </span>
              {p.check && <span className="-mr-0.5 ml-1"><GreenCheck /></span>}
              <span className="mr-[3px] ml-[3px]">{p.icon}</span>
              {p.name}
            </li>
          ))}
          {features.map((f, i) => (
            <li
              role="treeitem"
              key={i}
              className={i === features.length - 1 ? `${rowClass} font-bold` : rowClass}
            >
              <span className="w-9" />
              <CheckBoxIcon />
              <span className="mr-[3px] ml-0.5">
                {f === 'datum' ? <Csys size={14} /> : f === 'sketch' ? <SketchSmall /> : <ExtrudeIcon size={14} />}
              </span>
              {featureNames[f]}
            </li>
          ))}
          {blankRows.map(r => <li key={r} role="presentation" className={rowClass} />)}
          {/* connector lines and the column divider run across the rows */}
          <span className="absolute top-2 left-[10px] -z-0 h-20 border-l border-dotted border-[#aaa]" />
          <span className="absolute top-[95px] left-[26px] h-[170px] border-l border-dotted border-[#aaa]" />
          <span className="absolute inset-y-0 left-[193px] border-l border-[#ececec]" />
        </ul>
        <div className="mb-1 flex h-4 shrink-0 items-center bg-[#f1f1f1]">
          <IconButton label="Scroll left" className="w-4"><Ico size={8} box={8}><path d="M6 0L2 4l4 4" stroke="#222" strokeWidth="1.600" /></Ico></IconButton>
          <div className="flex h-[14px] flex-1"><span className="w-[70%] bg-[#cdcdcd]" /></div>
          <IconButton label="Scroll right" className="w-4"><Ico size={8} box={8}><path d="M2 0l4 4-4 4" stroke="#222" strokeWidth="1.600" /></Ico></IconButton>
        </div>
      </div>
      <span className="h-1 shrink-0 border border-t-0 border-[#c4c4c4] bg-[#dcdcdc]" />
    </section>
  );
}

/* ---------- graphics window ---------- */

function GraphicsWindow() {
  return (
    <main className="min-w-0 flex-1 border-l border-[#777] bg-linear-to-b from-[#b0b4b5] to-[#e7ebec]">
      <svg viewBox="319 157 959 504" preserveAspectRatio="xMinYMin slice" className="block h-full w-full" fill="none" role="img" aria-label="Extruded block">
        <path d="M536 209L842 403 791 663H586L463 585z" fill="#6f7d7d" />
        <path d="M842 403l189-38-58 298H790z" fill="#748282" />
        <path d="M536 209l190-38 305 194-189 38z" fill="#f25f63" stroke="#c9373d" strokeWidth="2" />
        <path d="M536 209l-73 376M842 403l-51 260M1031 366l-57 297" stroke="#333c3c" strokeWidth="1.200" />
        <path d="M463 585l122 78" stroke="#3b48d0" strokeWidth="2" />

        <g stroke="#e3e6e6" strokeWidth="1.200">
          <path d="M588 626l12-56 8-46M588 626l48-9 38-8M588 626l41 26 18 11M600 570l45-9-8 56-8 35 46-9-39-26M600 570l38 25" />
        </g>
        <path d="M609 515l3 14-7-1z" fill="#c4caca" />
        <path d="M680 608l-11-3 1 6z" fill="#f2f4f4" />
        <g fill="#d5d9d9" fontSize="12" fontFamily="'Liberation Sans', sans-serif">
          <text x="607" y="514">Z</text>
          <text x="681" y="612">Y</text>
        </g>

        <g strokeWidth="1">
          <path d="M536 204v10M531 209h10" stroke="#8d5a5a" />
          <path d="M565 205l25 14-28 6" stroke="#a24a50" />
          <path d="M565 205l-4 20-4 14-27 6" stroke="#d8dada" strokeWidth="1.500" />
          <path d="M540 250l15 12 4-24" stroke="#7d6a6c" />
          <path d="M521 265l6 1-3 12zM581 197l9 2-8 4zM574 235l8 3-5 2z" fill="#7a3034" />
          <path d="M517 281l6 2-5 6 6 1M590 242l3-4" stroke="#8d5a5a" />
        </g>
        <text x="594" y="202" fontSize="12" fill="#e8b8b8" fontFamily="'Liberation Sans', sans-serif">X</text>

        <g stroke="#946266" strokeWidth="1.200">
          <path d="M357 538l-11 56 36-7 20-3M353 559l29-6-6 32v25M353 559l24 15M346 594l38 24 12 6M376 589l24 15-36 8M342 594h9" />
        </g>
        <path d="M403 583l-12-2 2 6zM395 624l-10-5 1 6z" fill="#83484c" />
        <path d="M366 602l14-5 10 7v13l-11 5-13-7z" fill="#c3cbc4" fillOpacity=".8" stroke="#a9b3aa" />
        <path d="M366 602l12 6 12-4M378 608v14" stroke="#a9b3aa" />
        <path d="M363 614l3-20" stroke="#101c98" strokeWidth="2.500" />
        <path d="M367 588l2 10h-5z" fill="#101c98" />
        <path d="M364 615l14 9" stroke="#b01820" strokeWidth="2.500" />
        <path d="M383 627l-9-1 3-5z" fill="#b01820" />
        <circle cx="363" cy="615" r="3" fill="#8f9696" />
        <g fontSize="12" fontFamily="'Liberation Sans', sans-serif">
          <text x="364" y="588" fill="#2a48d8">Z</text>
          <text x="404" y="586" fill="#83484c">Y</text>
          <text x="381" y="633" fill="#c01820">X</text>
          <text x="396" y="633" fill="#83484c">X</text>
        </g>

        {/* pick cursor */}
        <circle cx="859" cy="308" r="10.500" stroke="#5a1518" strokeWidth="2.400" strokeDasharray="13 3.500" strokeDashoffset="-2" />
        <circle cx="859" cy="308" r="10.500" stroke="#ffd9da" strokeWidth="1.200" strokeDasharray="13 3.500" strokeDashoffset="-2" />
        <path d="M859 294v29M845 308h29" stroke="#3a0c0e" strokeWidth="4" />
        <path d="M859 295v27M846 308h27" stroke="#fff" strokeWidth="1.600" />
      </svg>
    </main>
  );
}

/* ---------- Datum CSYS dialog ---------- */

function Section({ title, children }: { title: string } & Kids) {
  return (
    <section className="border-b border-[#d2d2d2] bg-white px-[7px] shadow-xs">
      <h3 className="flex h-6 items-center justify-between text-[12px] text-[#3c8797]">
        {title}
        <IconButton label={`Collapse ${title}`}>
          <Ico size={12} box={12}><path d="M2 9l4-6 4 6" stroke="#25707f" strokeWidth="1.800" /></Ico>
        </IconButton>
      </h3>
      {children}
    </section>
  );
}

const Star = () => (
  <Ico size={12} className="ml-0.5">
    <path d="M8 1v14M1 5l14 6M15 5L1 11" stroke="#cc1a24" strokeWidth="2.600" />
  </Ico>
);

const Bolt = ({ x = 0, y = 0 }: { x?: number; y?: number }) => (
  <path transform={`translate(${x} ${y})`} d="M8 0L2 6l2 1-4 6 7-6-2-1 4-5z" fill="#f0e04a" stroke="#5a5a20" strokeWidth=".8" />
);

const squareBtn = 'flex size-[22px] items-center justify-center border bg-white';

const ReverseBtn = () => (
  <button type="button" aria-label="Reverse direction" disabled className={`${squareBtn} border-[#d0d0d0]`}>
    <Ico size={14}>
      <path d="M2 14L12 4M3 3l10 11" stroke="#8d8d95" />
      <path d="M15 1l-5 2 3 3zM1 15l1-4 3 3z" fill="#9a9aa8" />
    </Ico>
  </button>
);

const DialogBtn = ({ label, children }: { label: string } & Kids) => (
  <button type="button" aria-label={label} className={`${squareBtn} border-[#b4b4b4]`}>
    <Ico size={16}>
      {children}
      <path d="M1 8v4h4M4 10l3 2-3 2" stroke="#d8702a" strokeWidth="1.500" />
      <path d="M8 14h7" stroke="#111" strokeWidth="2" strokeDasharray="1.500 1" />
    </Ico>
  </button>
);

interface SpecifyProps extends Kids {
  text: string;
  rowClassName?: string;
  splitClassName: string;
  caretClassName?: string;
  art: React.ReactNode;
}

function SpecifyRow({ text, rowClassName = '', splitClassName, caretClassName, art, children }: SpecifyProps) {
  return (
    <div className="mt-1 mb-2 flex h-[30px] items-center gap-[3px]">
      <div className={`flex h-full flex-1 items-center gap-[5px] text-[11px] ${rowClassName}`}>
        <Star />
        {text}
      </div>
      {children}
      <div className={`flex h-[30px] w-[46px] ${splitClassName}`}>
        <IconButton label={text} className="w-[30px] border-r border-inherit"><Ico size={22} box={22}>{art}</Ico></IconButton>
        <IconButton label={`${text} options`} className="flex-1"><Caret className={caretClassName} /></IconButton>
      </div>
    </div>
  );
}

function DatumDialog() {
  const footerBtn = 'h-[22px] w-[62px] border text-[11px]';
  return (
    <div role="dialog" aria-label="Datum CSYS" className="absolute top-[121px] left-[172px] w-[281px] bg-[#f0f0f0] text-[#333] shadow-[0_0_3px_rgba(0,0,0,0.25)]">
      <div className="flex h-[22px] items-center bg-[#5aa6b6] px-[7px] text-[11px] text-white">
        <GearIcon size={13} />
        <span className="ml-2 flex-1">Datum CSYS</span>
        <IconButton label="Reset" className="w-5">
          <Ico size={13}>
            <path d="M4 5a5.500 5.500 0 1 0 7-1" stroke="#fff" strokeWidth="2" />
            <path d="M7 1l7 2-4 4z" fill="#fff" />
          </Ico>
        </IconButton>
        <IconButton label="Close dialog" className="w-[18px]">
          <Ico size={12} box={12}><path d="M1 1l10 10M11 1L1 11" stroke="#fff" strokeWidth="2" /></Ico>
        </IconButton>
      </div>

      <div className="flex flex-col gap-0.5 px-[5px] pt-1">
        <Section title="Type">
          <div className="relative mt-1 mb-2 flex h-6 items-center border border-[#b4b4b4] p-0.5">
            <span className="absolute left-1 flex">
              <Ico size={14}>
                <circle cx="4" cy="6" r="3.200" fill="#c01820" />
                <path d="M6 6h9M12 9h4" stroke="#b04a4a" strokeWidth="1.400" />
                <path d="M1 12h3l-3 3h4M7 12h3M7 15h3" stroke="#666" />
              </Ico>
            </span>
            <select aria-label="Type" className="h-full flex-1 appearance-none border border-dotted border-[#444] bg-[#abd9dd] pl-[18px] text-[11px] outline-none">
              <option>Plane, X-axis, Point</option>
            </select>
            <span className="flex w-4 justify-center"><Caret /></span>
          </div>
        </Section>

        <Section title="Plane for Z-axis">
          <SpecifyRow
            text="Specify Plane"
            rowClassName="bg-[#f9e57c]"
            splitClassName="bg-[#f9e57c] border-[#fdf5c4]"
            art={<><path d="M2 2l13 2v15L2 16z" fill="#fff8c8" stroke="#333" strokeWidth="1.300" /><Bolt x={12} y={3} /></>}
          >
            <ReverseBtn />
            <DialogBtn label="Plane dialog"><path d="M6 2l8 1v8l-8-1z" stroke="#333" strokeWidth="1.200" /></DialogBtn>
          </SpecifyRow>
        </Section>

        <Section title="X-axis on Plane">
          <SpecifyRow
            text="Specify Vector"
            splitClassName="bg-[#67b7c4] border-[#a6d8df]"
            caretClassName="fill-white"
            art={<><path d="M8 6v13" stroke="#333" strokeWidth="1.600" /><path d="M8 1l3 5-3 3-3-3z" fill="#b01820" /><Bolt x={11} y={6} /></>}
          >
            <ReverseBtn />
            <DialogBtn label="Vector dialog"><path d="M11 4v8" stroke="#b01820" strokeWidth="1.500" /><path d="M11 0l3 5H8z" fill="#b01820" /></DialogBtn>
          </SpecifyRow>
        </Section>

        <Section title="Origin on Plane">
          <SpecifyRow
            text="Specify Point"
            splitClassName="border border-[#b4b4b4] bg-white"
            art={<><Bolt x={5} y={3} /><circle cx="16" cy="17" r="2" fill="#c01820" /></>}
          >
            <DialogBtn label="Point dialog"><path d="M10 1v9M6 5h9" stroke="#222" strokeWidth="1.400" /></DialogBtn>
          </SpecifyRow>
        </Section>

        <Section title="Settings">
          <label className="mt-1 flex h-5 items-center gap-1 text-[11px]">
            <input type="checkbox" defaultChecked className="peer absolute size-[13px] appearance-none" />
            <span className="flex size-[13px] items-center justify-center border border-[#666] bg-white">
              <Ico size={10} box={10}><path d="M1 5l3 3 5-7" stroke="#333" strokeWidth="1.300" /></Ico>
            </span>
            Associative
          </label>
          <div className="mt-0.5 mb-1.5 flex h-[22px] items-center justify-between text-[11px]">
            <label htmlFor="scale">Scale Factor</label>
            <input
              id="scale"
              type="text"
              defaultValue="1.2500"
              className="h-[22px] w-[77px] border border-[#a8a8a8] bg-white pr-[3px] text-right font-['Liberation_Mono',monospace] text-[14px] text-[#555] outline-none"
            />
          </div>
        </Section>
      </div>

      <div className="flex justify-end gap-[5px] px-[14px] pt-3 pb-[9px]">
        <button type="button" disabled className={`${footerBtn} border-[#bcbcbc] text-[#b0b0b0]`}>OK</button>
        <button type="button" disabled className={`${footerBtn} border-[#bcbcbc] text-[#b0b0b0]`}>Apply</button>
        <button type="button" className={`${footerBtn} border-[#a4a4a4] bg-[#dedede]`}>Cancel</button>
      </div>
    </div>
  );
}

/* ---------- status bar and task bar ---------- */

function StatusBar() {
  return (
    <footer className="flex h-[21px] shrink-0 items-center border-t border-[#bbb] bg-white px-[3px] text-[10px] font-semibold text-[#222]">
      <span className="flex-1">Select objects to define plane</span>
      <span className="flex-1 pr-[14px] text-center">Face of Extrude(5)</span>
      <span className="flex flex-1 justify-end gap-1">
        <Ico size={15}><path d="M0 0h16v16H0z" fill="#e2e2e2" stroke="#bbb" /><path d="M2 4l4 9 3-9 4 8M2 8h12M4 13l8-9" stroke="#aaa" /></Ico>
        <Ico size={16} className="mr-12">
          <path d="M1 4V1h3M12 1h3v3M15 12v3h-3M4 15H1v-3" stroke="#888" />
          <path d="M4 4h8v8H4z" fill="#fff" stroke="#3b6ea8" />
          <path d="M5 6h6v4H5z" fill="#5c93d6" />
        </Ico>
      </span>
    </footer>
  );
}

const Chrome = ({ size = 21, children }: { size?: number } & Kids) => (
  <Ico size={size} box={24}>
    <circle cx="12" cy="12" r="11" fill="#34a853" />
    <path d="M12 1a11 11 0 0 1 9.500 5.500H12L7 14 2.500 6.500A11 11 0 0 1 12 1z" fill="#e2402f" />
    <path d="M21.500 6.500A11 11 0 0 1 12 23l5-8-5-8.500z" fill="#fbc116" />
    <circle cx="12" cy="12" r="5.500" fill="#fff" />
    <circle cx="12" cy="12" r="4.300" fill="#4285f4" />
    {children}
  </Ico>
);

const apps = [
  { name: 'Chrome', bar: true, art: <Chrome /> },
  {
    name: 'Explorer',
    bar: true,
    art: <Ico size={22} box={22}><path d="M1 3h8l2 2h10v14H1z" fill="#e8b030" /><path d="M1 7h20v12H1z" fill="#fbdf7e" /><path d="M5 12h12v7h-3v-4H8v4H5z" fill="#3f97d8" /></Ico>,
  },
  {
    name: 'Telegram',
    art: <Ico size={21} box={22}><circle cx="11" cy="11" r="10.500" fill="#35a5dc" /><path d="M4 11l13-5-3 11-4-3-2 2v-3l6-5-7 4z" fill="#fff" /></Ico>,
  },
  {
    name: 'SolidWorks',
    art: (
      <span className="relative flex size-[22px] flex-col items-center justify-center rounded-sm bg-[#b81824] text-white">
        <span className="text-[11px] leading-3 font-bold">SW</span>
        <span className="text-[8px] leading-2 font-bold">2019</span>
      </span>
    ),
  },
  {
    name: 'OBS',
    bar: true,
    art: <Ico size={22} box={22}><circle cx="11" cy="11" r="10" fill="#26262a" stroke="#e4e4e4" strokeWidth="1.300" /><path d="M9 4c-2 3-1 6 2 7M17 10c-2-2-5-2-6 1M7 17c3 1 5-2 4-6" stroke="#cfcfcf" strokeWidth="2.2" /></Ico>,
  },
  {
    name: 'NX',
    bar: true,
    active: true,
    art: <Ico size={24} box={24}><circle cx="11" cy="13" r="8" fill="#2a9ae0" /><path d="M4 12c3 0 5 4 9 8-6 2-10-3-9-8z" fill="#7ee0f0" /><path d="M18 7c8-1 5 6-2 10-5 3-11 5-13 4-1-1 1-3 3-4" stroke="#f0b838" strokeWidth="2" /><path d="M3 1l11 1-4 11z" fill="#c81c38" /></Ico>,
  },
  {
    name: 'Illustrator',
    art: <span className="flex size-5 items-center justify-center border-2 border-[#e08a20] bg-[#2b1606] text-[11px] leading-none font-semibold text-[#f7941d]">Ai</span>,
  },
  {
    name: 'Chrome profile',
    bar: true,
    art: <Chrome><circle cx="18" cy="18" r="5.500" fill="#d9604a" stroke="#e8d8c0" /><path d="M14 19c3 3 6 2 8-1" stroke="#3f97d8" strokeWidth="2" /></Chrome>,
  },
];

function TaskBar() {
  return (
    <footer className="flex h-[38px] shrink-0 items-stretch bg-linear-to-r from-[#22393d] via-[#20333f] to-[#1a2544] text-white">
      <IconButton label="Start" className="w-[45px]">
        <Ico size={18}><path d="M1 3l6-1v5H1zM8 2l7-1v6H8zM1 8h6v6l-6-1zM8 8h7v7l-7-1z" fill="#fff" /></Ico>
      </IconButton>
      <label className="flex w-[321px] items-center gap-[11px] border-y border-[#9a9a9a] bg-[#f1f1f1] pl-3">
        <Ico size={15}><circle cx="10" cy="6" r="5" stroke="#333" strokeWidth="1.400" /><path d="M6 10l-5 5" stroke="#333" strokeWidth="1.400" /></Ico>
        <input
          type="search"
          aria-label="Поиск"
          placeholder="Введите здесь текст для поиска"
          className="min-w-0 flex-1 text-[13px] outline-none placeholder:text-[#555]"
        />
      </label>
      <div className="ml-0.5 flex">
        {apps.map(app => (
          <button
            type="button"
            key={app.name}
            aria-label={app.name}
            className="flex w-[46px] flex-col items-center"
          >
            <span className={app.active ? 'flex w-[45px] flex-1 items-center justify-center bg-[#4d6166]' : 'flex w-[45px] flex-1 items-center justify-center'}>{app.art}</span>
            <span className={app.active ? 'h-[3px] w-[45px] bg-[#7ab8e8]' : app.bar ? 'h-[3px] w-[38px] bg-[#7ab8e8]' : 'h-[3px]'} />
          </button>
        ))}
      </div>
      <div className="ml-auto flex items-center text-[12px]">
        <span className="size-[18px] rounded-full bg-linear-to-br from-[#ffe070] to-[#f49a1a]" />
        <span className="ml-2.5">27°C</span>
        <span className="ml-2">Солнечно</span>
        <span className="ml-3.5 flex items-center gap-[6px]">
          <Ico size={16}><path d="M2 11l6-6 6 6" stroke="#fff" strokeWidth="1.400" /></Ico>
          <Ico size={16}><path d="M3 5h7v6H3zM10 7l3-1v5l-3-1M4 2c2-1 5-1 7 0M4 14c2 1 5 1 7 0" stroke="#fff" strokeWidth="1.200" /></Ico>
          <Ico size={17}><path d="M3 13a3 3 0 0 1 0-6 5 5 0 0 1 9-1 4 4 0 0 1 1 7z" fill="#e6e8ec" /></Ico>
          <Ico size={16}><path d="M5 1h6v8c0 3-6 3-6 0z" fill="#fff" /><path d="M3 8c0 6 10 6 10 0M8 12v3M5 15h6" stroke="#fff" strokeWidth="1.200" /></Ico>
          <Ico size={17}><path d="M5 6h9v6H5zM15 8v2M1 3h5M3 3v4h3" stroke="#fff" strokeWidth="1.400" /><path d="M6 7h7v4H6z" fill="#fff" /></Ico>
          <Ico size={16}><path d="M2 14A12 12 0 0 1 14 2M5 14a9 9 0 0 1 9-9M8 14a6 6 0 0 1 6-6" stroke="#b8bcc4" strokeWidth="1.300" /><circle cx="12" cy="13" r="1.800" fill="#fff" /></Ico>
          <Ico size={17}><path d="M1 6h3l4-4v12l-4-4H1z" stroke="#fff" /><path d="M10 6c1 1 1 3 0 4M12 4c2 2 2 6 0 8M14 2c3 3 3 9 0 12" stroke="#fff" /></Ico>
        </span>
        <span className="ml-2 text-[11px]">ENG</span>
        <span className="ml-2.5 flex w-[54px] flex-col items-center text-[10px] leading-4">
          <time>13:01</time>
          <time>22.09.2021</time>
        </span>
        <span className="relative ml-3.5 flex w-9">
          <Ico size={18}><path d="M1 1h14v11H7l-4 3v-3H1z" fill="#fff" /><path d="M3 4h10M3 7h10M3 9h6" stroke="#1a2544" /></Ico>
          <span className="absolute top-2 left-2 flex size-[14px] items-center justify-center rounded-full border border-[#888] bg-[#1b1f28] text-[9px] leading-none">1</span>
        </span>
        <span className="mr-[3px] h-full w-px bg-[#55607a]" />
      </div>
    </footer>
  );
}

export default function App() {
  return (
    <div className="relative flex h-screen flex-col overflow-hidden border-x-2 border-black bg-white font-['Open_Sans','Noto_Sans',sans-serif]">
      <TitleBar />
      <TabBar />
      <Ribbon />
      <SelectionBar />
      <div className="flex min-h-0 flex-1">
        <ResourceBar />
        <PartNavigator />
        <GraphicsWindow />
      </div>
      <StatusBar />
      <TaskBar />
      <DatumDialog />
    </div>
  );
}
